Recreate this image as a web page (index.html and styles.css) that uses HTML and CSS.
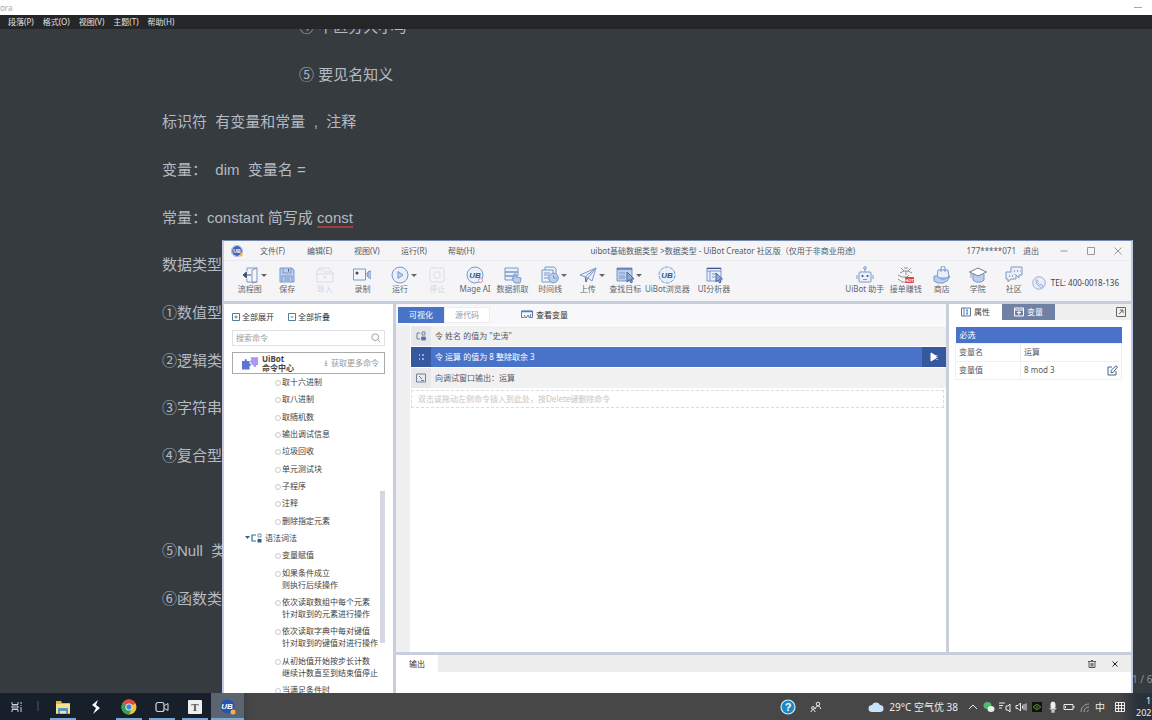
FILE: index.html
```html
<!DOCTYPE html>
<html lang="zh-CN">
<head>
<meta charset="utf-8">
<title>Typora</title>
<link rel="stylesheet" href="styles.css">
</head>
<body>
<div class="desktop">
  <main class="editor">
    <header class="editor-title"><span>ora</span><span class="editor-min"></span></header>
    <nav class="editor-menu">
      <button>段落(P)</button><button>格式(O)</button><button>视图(V)</button><button>主题(T)</button><button>帮助(H)</button>
    </nav>
    <article class="doc">
      <p class="indent">④ 不区分大小写</p>
      <p class="indent">⑤ 要见名知义</p>
      <p>标识符  有变量和常量  ,  注释</p>
      <p>变量：  dim  变量名 =</p>
      <p>常量：constant 简写成 <span class="misspelt">const</span></p>
      <p>数据类型</p>
      <p>①数值型</p>
      <p>②逻辑类型</p>
      <p>③字符串</p>
      <p>④复合型</p>
      <p></p>
      <p>⑤Null  类型</p>
      <p>⑥函数类型</p>
    </article>
    <footer class="editor-status">1 / 6</footer>
  </main>

  <section class="app">
    <header class="app-title">
      <svg class="app-logo" viewBox="0 0 16 16"><circle cx="8" cy="8" r="5.6" fill="#3d66b5"/><circle cx="8" cy="8" r="6.4" fill="none" stroke="#8aa5d8" stroke-width=".8"/><text x="8" y="10.400" text-anchor="middle" class="logo-text">UB</text><circle cx="12.500" cy="12.500" r="1.800" fill="#edb84b"/></svg>
      <nav class="app-menu"><button>文件(F)</button><button>编辑(E)</button><button>视图(V)</button><button>运行(R)</button><button>帮助(H)</button></nav>
      <h1>uibot基础数据类型 &gt;数据类型 - UiBot Creator 社区版（仅用于非商业用途)</h1>
      <span class="account">177*****071</span><button class="logout">退出</button>
      <div class="win-buttons">
        <button aria-label="最小化"><svg viewBox="0 0 10 10"><path d="M1.500 5h7"/></svg></button>
        <button aria-label="最大化"><svg viewBox="0 0 10 10"><path d="M1.500 1.500h7v7h-7z"/></svg></button>
        <button aria-label="关闭"><svg viewBox="0 0 10 10"><path d="M1.500 1.500l7 7M8.500 1.500l-7 7"/></svg></button>
      </div>
    </header>

    <div class="toolbar">
      <div class="tools">
        <button class="drop"><svg viewBox="0 0 18 18"><path d="M6 5V2h10v14H6v-3M16 2l-5 2v13l5-1"/><path class="dark" d="M10 9H2M5.500 6L2 9l3.500 3z"/></svg><span>流程图</span></button>
        <button><svg viewBox="0 0 18 18"><path class="tint" d="M2 2h12l2 2v12H2z"/><path d="M5 2v5h8V2M4 16v-6h10v6M6 12h6M6 14h6"/><path class="dark" d="M10.500 3v2.500"/></svg><span>保存</span></button>
        <button class="off" disabled><svg viewBox="0 0 18 18"><path d="M1 4h6l1.500 2H17v10H1zM3 4V2h10l2 4M1 8h16"/><path d="M9 13v-3M7.500 11.500L9 10l1.500 1.500"/></svg><span>导入</span></button>
        <button><svg viewBox="0 0 18 18"><path d="M0.500 3h12v11h-12zM14 7l3-2v7l-3-2z"/><circle class="dot" cx="4" cy="7" r="1.500"/><path class="tint" d="M15 6l3-1v8l-3-2z"/></svg><span>录制</span></button>
        <button class="drop"><svg viewBox="0 0 18 18"><circle class="pale" cx="9" cy="9" r="8"/><path class="tint" d="M7 5.500v7l5-3.500z"/></svg><span>运行</span></button>
        <button class="off" disabled><svg viewBox="0 0 18 18"><rect x="2" y="2" width="14" height="14" rx="2"/><rect x="6" y="6" width="6" height="6" rx="1"/></svg><span>停止</span></button>
        <button><svg viewBox="0 0 18 18"><circle class="pale" cx="9" cy="9" r="8"/><text x="9" y="12" text-anchor="middle" class="ub">UB</text><circle cx="14.500" cy="14.500" r="2" fill="#fff" stroke="#e08a94"/></svg><span>Mage AI</span></button>
        <button><svg viewBox="0 0 18 18"><path class="pale" d="M1 2h13v4H1zM1 6h13v4H1zM1 10h10v4H1z"/><path class="tint" d="M10 16l-2-4 2 0V8h2v3l5 1-1 5h-5z"/></svg><span>数据抓取</span></button>
        <button class="drop"><svg viewBox="0 0 18 18"><path class="pale" d="M1 4h11v12H1zM4 4V1h9l2 2v5M3 7h6M3 9h5M3 12h5"/><circle class="tint" cx="12.500" cy="12" r="4.800"/><path d="M12.500 9v3h3"/></svg><span>时间线</span></button>
        <button class="drop"><svg viewBox="0 0 18 18"><path class="pale" d="M1 9l16-7-4 13-4-3zM17 2L6 11l1 5 2-4z"/><path class="dark" d="M7 12v4"/></svg><span>上传</span></button>
        <button class="drop"><svg viewBox="0 0 18 18"><path class="tint" d="M1 2h15v13H1z"/><path class="dark" d="M1 3h15"/><path d="M3 7h6M3 10h6M3 12h6"/><path class="cursor" d="M11 6v10l2.500-2.500L15 17l1.500-1-1.500-3h3z"/></svg><span>查找目标</span></button>
        <button><svg viewBox="0 0 18 18"><circle class="pale" cx="9" cy="9" r="8" stroke-dasharray="4 1"/><text x="9" y="12" text-anchor="middle" class="ub">UB</text></svg><span>UiBot浏览器</span></button>
        <button><svg viewBox="0 0 18 18"><path class="pale" d="M2 2h14v13H2zM2 5h14M5 5v10M7 8h4M7 11h3"/><path class="dark" d="M2 2.500h14"/><path class="cursor" d="M11 7v9l2-2 1.500 3 1.500-1-1.500-3h3z"/></svg><span>UI分析器</span></button>
      </div>
      <div class="links">
        <button><svg viewBox="0 0 18 18"><rect class="pale" x="3" y="6" width="12" height="10" rx="1"/><path d="M9 6V3M1 9v4M17 9v4M7 13.500h4"/><circle cx="9" cy="2" r="1.300"/><circle class="dot" cx="6.500" cy="10" r="1"/><circle class="dot" cx="11.500" cy="10" r="1"/></svg><span>UiBot 助手</span></button>
        <button><svg viewBox="0 0 18 18"><path class="grey" d="M4 2l3 3-4 2M14 2l-3 3 4 2M7 2h4M7 5h4M9 5v4M1 9l4 2 5 0 2-2M1 13l4 3h5"/><rect x="8" y="11" width="9" height="6" rx="1" fill="#dc4543" stroke="none"/><text x="12.500" y="15.500" text-anchor="middle" class="hot">HOT</text></svg><span>接单赚钱</span></button>
        <button><svg viewBox="0 0 18 18"><path class="pale" d="M5 4h10l1 8H4zM8 6V2a2 2 0 0 1 4 0v4"/><path class="tint" d="M1 10h3l4 3h4l5-3-3 5-4 2H5l-4-2z"/></svg><span>商店</span></button>
        <button><svg viewBox="0 0 18 18"><path class="tint" d="M4 8v6c2 3 9 3 11 0V8"/><path class="hat" d="M0.500 6L9 2l8.500 4L9 10z"/><path d="M2 7v5"/></svg><span>学院</span></button>
        <button><svg viewBox="0 0 18 18"><path class="pale" d="M6 1h11v8h-3v3l-3-3H6z"/><path class="pale" d="M6 6H1v7h2v3l3-3h5v-3"/><path class="dark" d="M9 5h1M12 5h1M15 5h.5M4 10h1M7 10h1"/></svg><span>社区</span></button>
        <a class="tel" href="tel:4000018136"><svg viewBox="0 0 18 18"><circle class="pale" cx="9" cy="9" r="8"/><path d="M6 4.500l2 2.500-1 1.500 3 3 1.500-1 2.500 2c-1 3-4 2-6 0s-4-5-2-8z"/></svg>TEL: 400-0018-136</a>
      </div>
    </div>

    <div class="app-body">
      <aside class="commands">
        <div class="tree-actions">
          <button><svg viewBox="0 0 8 8"><path d="M.5.5h7v7h-7zM2.500 4h3M4 2.500v3"/></svg>全部展开</button>
          <button><svg viewBox="0 0 8 8"><path d="M.5.5h7v7h-7zM2.500 4h3"/></svg>全部折叠</button>
        </div>
        <label class="search"><input type="text" placeholder="搜索命令" aria-label="搜索命令"><svg viewBox="0 0 12 12"><circle cx="5" cy="5" r="4"/><path d="M8 8l3 3"/></svg></label>
        <button class="banner">
          <svg viewBox="0 0 18 16"><path d="M0 6h3c-1-3 3-3 2 0h3v3c2-1 2 3 0 2v4H0z" fill="#5b74d6"/><path d="M9 2h8v8h-2c1 3-3 3-3 0H10V8C8 8 8 5 10 5z" fill="#a99af0"/></svg>
          <strong>UiBot<br>命令中心</strong>
          <span><svg class="down" viewBox="0 0 6 8"><path d="M3 0v5M1 4l2 2 2-2M1 7.500h4"/></svg>获取更多命令</span>
        </button>
        <div class="tree-view">
          <ul class="tree">
            <li>取十六进制</li><li>取八进制</li><li>取随机数</li><li>输出调试信息</li><li>垃圾回收</li><li>单元测试块</li><li>子程序</li><li>注释</li><li>删除指定元素</li>
            <li class="group"><svg viewBox="0 0 18 10"><path d="M0 3h5L2.500 6z" fill="#2f6283"/><path d="M11 2H7v6h4" fill="none" stroke="#2d7394" stroke-width="1.200"/><path d="M13 1h3v3h-3z" fill="none" stroke="#7094b8"/><path d="M12.500 6h4v3.500h-4z" fill="#286483"/></svg>语法词法</li>
            <li>变量赋值</li>
            <li>如果条件成立<br>则执行后续操作</li>
            <li>依次读取数组中每个元素<br>针对取到的元素进行操作</li>
            <li>依次读取字典中每对键值<br>针对取到的键值对进行操作</li>
            <li>从初始值开始按步长计数<br>继续计数直至到结束值停止</li>
            <li>当满足条件时</li>
          </ul>
          <div class="thumb"></div>
        </div>
      </aside>

      <div class="work">
        <div class="panes">
          <section class="flow">
            <div class="flow-tabs">
              <button class="on">可视化</button><button class="source">源代码</button>
              <button class="vars"><svg viewBox="0 0 12 9"><path d="M.5 1h11v6.500H8M.5 1v6.500h3" /><path d="M.5 1.500h11" stroke-width="1.500"/><path d="M3 5l2 3 2-3 1.500 3L10 4"/></svg>查看变量</button>
            </div>
            <ol class="steps">
              <li><i><svg viewBox="0 0 10 10"><path d="M4 2H1v6h3M6 1h3v3H6z"/><path d="M5.500 6h4v3h-4z" fill="#5372a8"/></svg></i><span>令 姓名 的值为 "史涛"</span></li>
              <li class="current"><i><svg viewBox="0 0 10 10"><path d="M3 3h1M3 7h1M6 3h2M6 7h2"/></svg></i><span>令 运算 的值为 8 整除取余 3</span><button aria-label="运行"><svg viewBox="0 0 10 10"><path d="M2 1v8l5-3V4z" fill="#fff"/><path d="M8 3v5" stroke-dasharray="1 1"/></svg></button></li>
              <li><i><svg viewBox="0 0 10 10"><path d="M.5 1h9v8h-9zM3 3l3 3M5 7.500h3"/></svg></i><span>向调试窗口输出：运算</span></li>
            </ol>
            <p class="drop-hint">双击或拖动左侧命令插入到此处，按Delete键删除命令</p>
          </section>

          <section class="props">
            <div class="prop-tabs">
              <button class="on"><svg viewBox="0 0 10 10"><path d="M.5 1h9v8h-9zM3 1v8M5 3h2M6 3v4M5 7h2"/></svg>属性</button>
              <button class="other"><svg viewBox="0 0 10 10"><path d="M.5 1h9v8h-9zM.5 3h9M3 5.500h4M5 4v4"/></svg>变量</button>
              <button class="popout" aria-label="弹出"><svg viewBox="0 0 10 10"><path d="M.5.5h9v9h-9zM3 7l4-4M4 3h3v3"/></svg></button>
            </div>
            <table>
              <colgroup><col class="key"><col></colgroup>
              <thead><tr><th colspan="2">必选</th></tr></thead>
              <tbody>
                <tr><td>变量名</td><td>运算</td></tr>
                <tr><td>变量值</td><td><div class="value">8 mod 3<button aria-label="编辑"><svg viewBox="0 0 11 11"><path d="M9 6v4H1V2h4M4 5.500v2h2L10.500 2 9 .8z"/></svg></button></div></td></tr>
              </tbody>
            </table>
          </section>
        </div>
        <section class="output">
          <div class="output-bar"><button class="on">输出</button>
            <button class="clear" aria-label="清空"><svg viewBox="0 0 8 8"><path d="M0 1.500h8M3 .5h2M1 2v5.500h6V2M3 3v3.500M5 3v3.500M4 3v3.500"/></svg></button>
            <button class="shut" aria-label="关闭输出"><svg viewBox="0 0 8 8"><path d="M1.500 1.500l5 5M6.500 1.500l-5 5"/></svg></button></div>
        </section>
      </div>
    </div>
  </section>
</div>

<footer class="taskbar">
  <div class="pins">
    <button aria-label="任务视图"><svg viewBox="0 0 16 16"><path d="M3 3v2.500h6V3M3 13v-2.500h6V13M3 7h6v2H3zM12 3v2M12 8v5M11.500 6.500h1" fill="none" stroke="#c9d1d8"/></svg></button>
    <span class="divider"></span>
    <button class="open" aria-label="文件资源管理器"><svg viewBox="0 0 16 16"><path d="M1 2h5l1 2h8v11H1z" fill="#eab23e"/><path d="M1 5h14v9H1z" fill="#fbe08a"/><path d="M3 9h10v6h-2v-3H5v3H3z" fill="#4e9bc9"/></svg></button>
    <button aria-label="闪电"><svg viewBox="0 0 16 16"><path d="M10 1L4 6l4 3-3 6 7-6-4-3z" fill="#fff"/></svg></button>
    <button class="open" aria-label="Chrome"><svg viewBox="0 0 16 16"><circle cx="8" cy="8" r="7.500" fill="#f2c233"/><path d="M8 8L1.500 4.250a7.500 7.500 0 0 1 13 0z" fill="#dc4b3e"/><path d="M8 8L1.500 4.250A7.500 7.500 0 0 0 8 15.500l3-6z" fill="#35a05a"/><circle cx="8" cy="8" r="3.500" fill="#fff"/><circle cx="8" cy="8" r="2.700" fill="#4684dc"/></svg></button>
    <button class="open" aria-label="录像"><svg viewBox="0 0 16 16"><rect x="2" y="3.500" width="8" height="9" rx="2" fill="none" stroke="#d5dade" stroke-width="1.200"/><path d="M10.500 6.500L14 4.500v7l-3.500-2" fill="none" stroke="#d5dade"/></svg></button>
    <button class="open" aria-label="Typora"><svg viewBox="0 0 16 16"><rect x="1" y="1" width="14" height="14" rx="1" fill="#eef0f0"/><text x="8" y="12" text-anchor="middle" class="t">T</text></svg></button>
    <button class="open active" aria-label="UiBot"><svg viewBox="0 0 16 16"><circle cx="7.500" cy="7.500" r="7" fill="#2454b3"/><text x="7" y="10" text-anchor="middle" class="u">UB</text><circle cx="13" cy="13" r="2.500" fill="#f0b542"/></svg></button>
  </div>
  <div class="tray">
    <button class="help" aria-label="帮助"><svg viewBox="0 0 16 16"><circle cx="8" cy="8" r="7" fill="#1b87c4" stroke="#d6edf8" stroke-width="1.200"/><text x="8" y="12" text-anchor="middle" class="q">?</text></svg></button>
    <button class="people" aria-label="人脉"><svg viewBox="0 0 12 12"><circle cx="8" cy="3" r="1.800"/><path d="M5.500 8c0-4 5-4 5 0M1 11c0-3 4-3 4 0"/><circle cx="3" cy="7" r="1.400"/></svg></button>
    <button class="weather"><svg viewBox="0 0 16 12"><path d="M4 11a3.500 3.500 0 0 1 0-7 4.500 4.500 0 0 1 8 0 3.500 3.500 0 0 1 0 7z" fill="#c9e3f8"/></svg>29°C 空气优 38</button>
    <div class="status-icons">
      <button aria-label="显示隐藏的图标"><svg viewBox="0 0 12 12"><path d="M2 8l4-4 4 4"/></svg></button>
      <button aria-label="微信"><svg viewBox="0 0 12 12"><ellipse cx="4.500" cy="4.500" rx="4" ry="3.500" fill="#4fbb70" stroke="none"/><ellipse cx="8" cy="8" rx="3.500" ry="3" fill="#dff5e5" stroke="none"/></svg></button>
      <button aria-label="音频"><svg viewBox="0 0 12 12"><path d="M0 2h6M0 4.500h4M0 7h3M7 5h2l2-2v8L9 9H7z"/></svg></button>
      <button aria-label="音量"><svg viewBox="0 0 12 12"><path d="M1 4.500h2L5.500 2v8L3 7.500H1zM7.500 4.500v3M9 3v6M11 2.500v7"/></svg></button>
      <button aria-label="NVIDIA"><svg viewBox="0 0 12 12"><path d="M1 1h10v10H1z" fill="#111" stroke="none"/><path d="M2.500 6c2-3 5-3 7 0-2 3-5 3-7 0zM5 6h2" stroke="#6ba33a"/></svg></button>
      <button aria-label="麦克风"><svg viewBox="0 0 12 12"><rect x="4" y="1" width="4" height="7" rx="2" fill="#eee"/><path d="M3 7c0 3 6 3 6 0M6 9v2M4 11h4"/></svg></button>
      <button aria-label="电池"><svg viewBox="0 0 12 12"><path d="M1 3.500h9v5H1zM11 5v2M2.500 5v2"/></svg></button>
      <button class="dim" aria-label="网络"><svg viewBox="0 0 12 12"><path d="M2 11c0-5 4-8 8-8M5 11c0-3 2-5 5-5M8 11c0-1 1-2 2-2"/></svg></button>
    </div>
    <button class="lang">中</button>
    <button class="ime" aria-label="输入法"><svg viewBox="0 0 12 12"><path d="M1.500 1.500h9v9h-9zM1.500 4.500h9M1.500 7.500h9M4.500 1.500v9M7.500 1.500v9"/></svg></button>
    <time class="clock"><span>11:20</span><span>2021/7/9</span></time>
  </div>
</footer>
</body>
</html>
```

FILE: styles.css
```css
* { box-sizing: border-box; }

body {
  margin: 0;
  height: 100vh;
  display: flex;
  flex-direction: column;
  overflow: hidden;
  background: #363b40;
  font: 8px/12px "Noto Sans", "Noto Sans CJK SC", sans-serif;
  color: #555a62;
}

button {
  margin: 0;
  padding: 0;
  border: 0;
  background: none;
  color: inherit;
  font: inherit;
  white-space: nowrap;
}

svg { display: block; flex: none; fill: none; stroke: currentColor; }
svg text { stroke: none; font-family: "Liberation Sans", sans-serif; font-weight: bold; }
ul, ol, p, h1 { margin: 0; padding: 0; list-style: none; }

.desktop { flex: 1; min-height: 0; position: relative; display: flex; }

/* Editor behind */
.editor { flex: 1; min-width: 0; display: flex; flex-direction: column; overflow: hidden; }
.editor-title {
  flex: none;
  height: 15px;
  display: flex;
  justify-content: space-between;
  align-items: center;
  background: #fff;
  color: #a6a6a6;
}
.editor-min { width: 8px; height: 1px; margin-right: 10px; background: #aaa; }
.editor-menu {
  flex: none;
  height: 14px;
  display: flex;
  align-items: center;
  gap: 9px;
  padding-left: 8px;
  background: #252628;
  color: #e2e2e2;
}
.doc {
  flex: 1;
  min-height: 0;
  overflow: hidden;
  display: grid;
  grid-auto-rows: 1fr;
  align-items: center;
  padding: 0 0 42px 162px;
  margin-top: -26px;
  clip-path: inset(26px 0 0 0);
  font: 15px/24px "Liberation Sans", "Noto Sans CJK SC", sans-serif;
  color: #b4bac1;
  white-space: pre;
}
.doc .indent { padding-left: 137px; }
.misspelt { border-bottom: 2px solid #a63b3f; }
.editor-status {
  flex: none;
  padding-left: calc(100% - 20px);
  overflow: hidden;
  white-space: nowrap;
  font-size: 10px;
  line-height: 28px;
  color: #8d949b;
}

/* UiBot window */
.app {
  position: absolute;
  inset: 240px 19px 0 222px;
  display: flex;
  flex-direction: column;
  border: 2px solid #c0cae2;
  border-top: 1px solid #7388b2;
  border-bottom: 0;
  background: #f5f5f8;
}
.app-title { flex: none; height: 20px; display: flex; align-items: center; border-bottom: 1px solid #eaebef; }
.app-logo { width: 14px; height: 14px; margin: 0 16px 0 6px; stroke: none; }
.logo-text { font-size: 6px; fill: #fff; }
.app-menu { display: flex; }
.app-menu button { width: 47px; text-align: left; }
.app-title h1 { flex: 1; text-align: center; font-size: 8px; font-weight: normal; white-space: nowrap; }
.account { margin-left: 16px; }
.logout { margin-left: 7px; }
.win-buttons { display: flex; gap: 17px; margin: 0 8px 0 20px; color: #999; }
.win-buttons svg { width: 10px; height: 10px; }

.toolbar {
  flex: none;
  height: 43px;
  display: flex;
  justify-content: space-between;
  border-bottom: 3px solid #c5cddb;
  color: #62666d;
}
.tools {
  flex: 0 0 56.6%;
  display: grid;
  grid-template-columns: repeat(11, 37fr) 46fr 46fr;
  padding-left: 7px;
}
.tools button, .links button {
  position: relative;
  min-width: 0;
  display: flex;
  flex-direction: column;
  align-items: center;
  padding-top: 5px;
  line-height: 10px;
}
.toolbar svg { width: 18px; height: 18px; stroke: #7d97c7; }
.toolbar .off { color: #d3d4d8; }
.toolbar .off svg { stroke: #dcdde1; }
.toolbar .dark { stroke: #3e5787; fill: #3e5787; }
.toolbar .tint { fill: #b9cfed; }
.toolbar .pale { fill: #e9f0fa; }
.toolbar .hat { fill: #fff; stroke: #777f8c; }
.toolbar .grey { stroke: #8c9097; }
.toolbar .dot { fill: #394763; stroke: none; }
.toolbar .cursor { fill: #8faddb; stroke: #4b659a; }
.ub { font-size: 8px; font-style: italic; fill: #34568f; }
.hot { font-size: 4px; fill: #fff; }
.drop::after {
  content: "";
  position: absolute;
  top: 13px;
  left: calc(50% + 11px);
  border: 3px solid transparent;
  border-top-color: #666;
  border-bottom: 0;
}
.links { display: flex; padding-right: 12px; }
.links button { width: 36px; }
.links button:first-child { width: 46px; }
.tel { display: flex; align-items: center; gap: 5px; padding-top: 3px; color: #3f444c; text-decoration: none; white-space: nowrap; }
.toolbar .tel svg { width: 14px; height: 14px; }

.app-body { flex: 1; min-height: 0; display: flex; }

/* Command tree */
.commands {
  flex: none;
  width: 172px;
  display: flex;
  flex-direction: column;
  padding: 7px 8px 0;
  border-right: 3px solid #c9cedd;
  background: #fff;
}
.tree-actions { display: flex; gap: 14px; color: #33363b; }
.tree-actions button { display: flex; align-items: center; gap: 2px; }
.tree-actions svg { width: 8px; height: 8px; stroke: #4e7f96; }
.search { display: flex; align-items: center; height: 16px; margin-top: 7px; padding: 0 3px; border: 1px solid #e0e1e5; }
.search input { flex: 1; min-width: 0; padding: 0; border: 0; outline: 0; font: inherit; }
.search input::placeholder { color: #9b9b9f; opacity: 1; }
.search svg { width: 10px; height: 10px; stroke: #8d9299; }
.banner { display: flex; align-items: center; height: 22px; margin-top: 6px; padding: 0 5px 0 9px; border: 1px solid #aaa; }
.banner svg { width: 17px; height: 16px; stroke: none; }
.banner strong { margin-left: 3px; text-align: left; line-height: 9px; color: #444; }
.banner span { display: flex; align-items: center; gap: 3px; margin-left: auto; color: #9a9a9a; }
.banner .down { width: 4px; height: 6px; stroke: #777; }
.tree-view { position: relative; flex: 1; min-height: 0; margin-top: 4px; display: flex; overflow: hidden; }
.tree {
  flex: 1;
  display: flex;
  flex-direction: column;
  justify-content: space-between;
  margin: -2px 0 -3px;
  color: #3c3e42;
  white-space: nowrap;
}
.tree li { position: relative; padding-left: 50px; }
.tree li:not(.group)::before {
  content: "";
  position: absolute;
  left: 43px;
  top: 4px;
  width: 4px;
  height: 4px;
  border: 1px solid #c8cad2;
  border-radius: 50%;
}
.tree .group { display: flex; align-items: center; gap: 2px; padding-left: 13px; }
.tree .group svg { width: 18px; height: 10px; stroke: none; }
.thumb { position: absolute; right: 0; top: 36%; width: 5px; height: 48%; background: #d5d8e2; }

/* Flow editor */
.work { flex: 1; min-width: 0; display: flex; flex-direction: column; background: #fff; }
.panes { flex: 1; min-height: 0; display: flex; }
.flow {
  flex: 1;
  min-width: 0;
  display: flex;
  flex-direction: column;
  background: linear-gradient(90deg, #f0f0f3 14px, #fff 14px);
}
.flow-tabs { display: flex; align-items: center; height: 21px; padding-left: 2px; background: #f8f8fa; }
.flow-tabs button { height: 16px; width: 46px; }
.flow-tabs .on { background: #4973c8; color: #fff; }
.flow-tabs .source { background: #fff; color: #9a9ca1; border: 1px solid #ededf1; }
.flow-tabs .vars { width: auto; display: flex; align-items: center; gap: 3px; margin-left: 31px; color: #333; }
.vars svg { width: 12px; height: 9px; stroke: #587dae; }
.steps { display: grid; gap: 1px; padding: 1px 0 2px 15px; }
.steps li { display: flex; align-items: center; height: 20px; background: #f1f1f2; }
.steps i { align-self: stretch; width: 20px; display: grid; place-items: center; margin-right: 4px; background: #e8e8eb; color: #70809f; }
.steps svg { width: 10px; height: 10px; }
.steps .current { background: #4973c8; color: #fff; }
.steps .current i, .steps .current button { background: #36589f; color: #fff; }
.steps .current button { align-self: stretch; display: grid; place-items: center; width: 24px; margin-left: auto; }
.drop-hint { margin: 0 2px 0 15px; padding-left: 6px; border: 1px dashed #dadce2; line-height: 16px; color: #c5c6ca; }

/* Properties */
.props { flex: none; width: 185px; border-left: 3px solid #c9cedd; background: #fff; }
.prop-tabs { display: flex; height: 16px; background: #efeff0; }
.prop-tabs button { display: flex; align-items: center; justify-content: center; gap: 3px; width: 53px; }
.prop-tabs svg { width: 10px; height: 10px; }
.prop-tabs .on { background: #fff; color: #3b4047; }
.prop-tabs .on svg { stroke: #5278ad; }
.prop-tabs .other { background: #7081a6; color: #fff; }
.prop-tabs .popout { width: 10px; margin: 0 5px 0 auto; color: #666; }
.props table { width: calc(100% - 15px); margin: 7px 9px 0 6px; border-collapse: collapse; table-layout: fixed; }
.props .key { width: 65px; }
.props th { height: 16px; padding: 0 4px; background: #4973c8; color: #fff; text-align: left; font-weight: normal; }
.props td { height: 18px; padding: 0 3px; border: 1px solid #f0f0f2; }
.value { display: flex; align-items: center; justify-content: space-between; }
.value svg { width: 11px; height: 11px; stroke: #41628f; }

/* Output */
.output { flex: none; height: 41px; border-top: 3px solid #c9cedd; }
.output-bar { display: flex; align-items: center; height: 17px; background: #ededee; }
.output-bar .on { width: 42px; height: 100%; background: #fff; color: #333; }
.output-bar svg { width: 8px; height: 8px; }
.clear { margin-left: auto; }
.shut { margin: 0 12px 0 15px; color: #222; }

/* Taskbar */
.taskbar {
  flex: none;
  height: 27px;
  display: flex;
  justify-content: space-between;
  overflow: hidden;
  background: linear-gradient(90deg, #17202a 0 222px, #474747 250px calc(100% - 34px), #29323a calc(100% - 14px));
  color: #ececec;
}
.pins { display: flex; }
.pins button { width: 33px; display: grid; place-items: center; }
.pins svg { width: 16px; height: 16px; stroke: none; }
.pins .open { background: linear-gradient(#78a9d6, #78a9d6) bottom / 26px 2px no-repeat; }
.pins .active { background-color: #5c656f; background-size: 100% 2px; }
.divider { width: 2px; height: 10px; margin: 8px 7px 0 4px; background: #333c45; }
.t { font-size: 11px; fill: #555; font-family: "Liberation Serif", serif; }
.u { font-size: 8px; font-style: italic; fill: #fff; }
.q { font-size: 11px; fill: #fff; }
.tray { display: flex; align-items: center; }
.help svg { width: 16px; height: 16px; stroke: none; }
.people { margin-left: 14px; }
.people svg { width: 12px; height: 12px; }
.weather { display: flex; align-items: center; gap: 5px; margin: 0 9px 0 46px; font-size: 10px; }
.weather svg { width: 16px; height: 12px; stroke: none; }
.status-icons { display: flex; gap: 4px; }
.status-icons svg, .ime svg { width: 12px; height: 12px; }
.dim { color: #a5a5a5; }
.lang { margin-left: 4px; font-size: 10px; }
.ime { margin-left: 9px; }
.clock { width: 16px; margin-left: 10px; overflow: hidden; white-space: nowrap; font-size: 9px; }
.clock span { display: block; }
.clock span:first-child { padding-left: 10px; }
```
